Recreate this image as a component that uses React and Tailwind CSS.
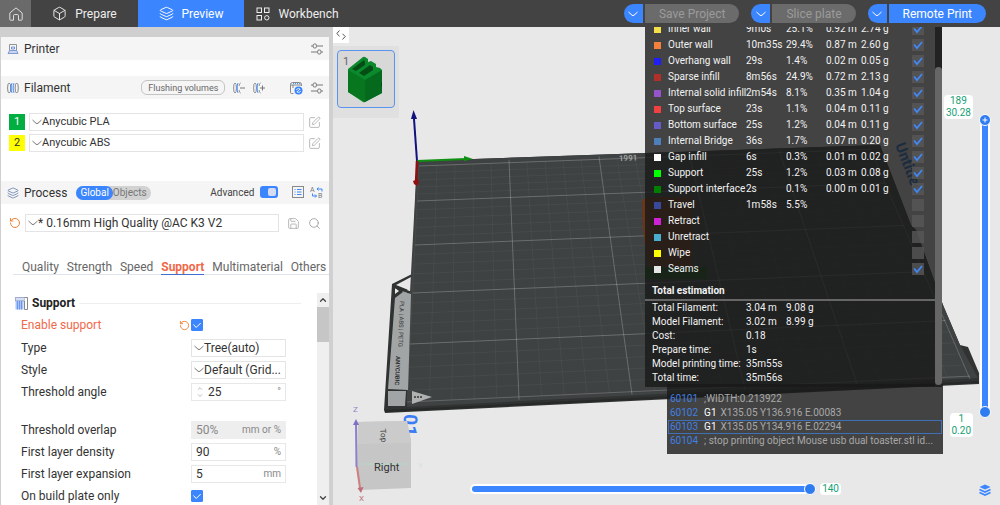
import { useState } from 'react';
import { Box, ChevronDown, ChevronUp, House, Layers, RotateCcw, Save, Search, SquarePen } from 'lucide-react';

const lineTypes = [
  { name: 'Inner wall', color: '#f5e04a', time: '9m0s', percent: '25.1%', length: '0.92 m', weight: '2.74 g', on: true },
  { name: 'Outer wall', color: '#f5803c', time: '10m35s', percent: '29.4%', length: '0.87 m', weight: '2.60 g', on: true },
  { name: 'Overhang wall', color: '#1f1ff5', time: '29s', percent: '1.4%', length: '0.02 m', weight: '0.05 g', on: true },
  { name: 'Sparse infill', color: '#b03029', time: '8m56s', percent: '24.9%', length: '0.72 m', weight: '2.13 g', on: true },
  { name: 'Internal solid infill', color: '#9654cc', time: '2m54s', percent: '8.1%', length: '0.35 m', weight: '1.04 g', on: true },
  { name: 'Top surface', color: '#f04040', time: '23s', percent: '1.1%', length: '0.04 m', weight: '0.11 g', on: true },
  { name: 'Bottom surface', color: '#665cc7', time: '25s', percent: '1.2%', length: '0.04 m', weight: '0.11 g', on: true },
  { name: 'Internal Bridge', color: '#4d80ba', time: '36s', percent: '1.7%', length: '0.07 m', weight: '0.20 g', on: true },
  { name: 'Gap infill', color: '#ffffff', time: '6s', percent: '0.3%', length: '0.01 m', weight: '0.02 g', on: true },
  { name: 'Support', color: '#00ff00', time: '25s', percent: '1.2%', length: '0.03 m', weight: '0.08 g', on: true },
  { name: 'Support interface', color: '#008000', time: '2s', percent: '0.1%', length: '0.00 m', weight: '0.01 g', on: true },
  { name: 'Travel', color: '#38489b', time: '1m58s', percent: '5.5%', on: false },
  { name: 'Retract', color: '#cd22d6', on: false },
  { name: 'Unretract', color: '#49adcf', on: false },
  { name: 'Wipe', color: '#ffff00', on: false },
  { name: 'Seams', color: '#e6e6e6', on: true },
];

const totals = [
  ['Total Filament:', '3.04 m', '9.08 g'],
  ['Model Filament:', '3.02 m', '8.99 g'],
  ['Cost:', '0.18'],
  ['Prepare time:', '1s'],
  ['Model printing time:', '35m55s'],
  ['Total time:', '35m56s'],
];

const gcode = [
  { line: 60101, text: ';WIDTH:0.213922' },
  { line: 60102, cmd: 'G1', text: 'X135.05 Y136.916 E.00083' },
  { line: 60103, cmd: 'G1', text: 'X135.05 Y134.916 E.02294' },
  { line: 60104, text: '; stop printing object Mouse usb dual toaster.stl id...' },
];

const tabs = ['Quality', 'Strength', 'Speed', 'Support', 'Multimaterial', 'Others'];

function GridIcon() {
  return (
    <svg className="h-[14px] w-[14px]" viewBox="0 0 14 14" fill="none" stroke="currentColor">
      <rect x="1" y="1" width="4.5" height="4.5" />
      <rect x="8.5" y="1" width="4.5" height="4.5" />
      <rect x="1" y="8.5" width="4.5" height="4.5" />
      <circle cx="10.8" cy="10.8" r="2.2" />
    </svg>
  );
}

function WideChevron() {
  return (
    <svg className="h-[6px] w-[10px] shrink-0" viewBox="0 0 10 6" fill="none" stroke="currentColor">
      <path d="M.5 1 4 4.200q1 .8 2 0L9.500 1" />
    </svg>
  );
}

function HomeIcon() {
  return (
    <svg className="h-[14px] w-[14px]" viewBox="0 0 14 14" fill="none" stroke="currentColor">
      <path d="M.8 6 7 .9 13.200 6v6.500q0 .7-.7.7H9.500V8.800q0-1.300-1.300-1.300H5.800q-1.300 0-1.300 1.300v4.400h-3q-.7 0-.7-.7z" />
    </svg>
  );
}

function SlidersIcon() {
  return (
    <svg className="h-3 w-3" viewBox="0 0 12 12" fill="none" stroke="#777">
      <path d="M0 3h2M5.5 3H12M0 9h6.5M10 9h2" />
      <rect x="2.2" y="1" width="3.2" height="4" rx="1.2" />
      <rect x="6.7" y="7" width="3.2" height="4" rx="1.2" />
    </svg>
  );
}

function PrinterIcon() {
  return (
    <svg className="h-3 w-3" viewBox="0 0 12 12" fill="none">
      <path d="M2.5 7.500V1.5h7v6" stroke="#888" strokeWidth=".9" />
      <path d="M4.500 4h3v2h-3z" stroke="#4b7be0" strokeWidth=".8" />
      <path d="M2.500 7.500h7l1.500 3H1z" fill="#c9d5f2" stroke="#6d86c4" strokeWidth=".8" />
    </svg>
  );
}

function SpoolIcon() {
  return (
    <svg className="h-3 w-3" viewBox="0 0 12 12" fill="none">
      <ellipse cx="2.2" cy="6" rx="1.6" ry="5" stroke="#777" strokeWidth=".9" />
      <path d="M5 1.2C3.8 3 3.8 9 5 10.8M7 1.2C5.8 3 5.8 9 7 10.8" stroke="#3b86ff" />
      <ellipse cx="9.7" cy="6" rx="1.6" ry="5" stroke="#777" strokeWidth=".9" />
    </svg>
  );
}

function SpoolEditIcon({ add }) {
  return (
    <svg className="h-3 w-3" viewBox="0 0 12 12" fill="none">
      <ellipse cx="2" cy="6" rx="1.4" ry="5" stroke="#888" strokeWidth=".9" />
      <path d="M5 1.2C3.8 3 3.8 9 5 10.8" stroke="#3b86ff" />
      <path d="M7.5 1C6.5 1.5 6.2 3 6.2 4M6.2 8c0 1 .3 2.500 1.300 3" stroke="#888" />
      <path d="M7 6h5" stroke="#777" />
      {add && <path d="M9.500 3.500v5" stroke="#777" />}
    </svg>
  );
}

function SyncIcon() {
  return (
    <svg className="h-[14px] w-[14px]" viewBox="0 0 14 14" fill="none">
      <path d="M12.500 5V3.500a2 2 0 0 0-2-2h-7a2 2 0 0 0-2 2V4h11M1.500 4v7.500a1 1 0 0 0 1 1h2M4 4v3" stroke="#888" />
      <path d="M4 2.600h7" stroke="#3b86ff" strokeDasharray="1 1" />
      <circle cx="9.500" cy="9.500" r="4" fill="#3b86ff" />
      <path d="M7.300 9c.8-1.800 3-1.900 4-.5M11.700 10c-.8 1.800-3 1.900-4 .5M8 11l3-3" stroke="#fff" strokeWidth=".8" />
    </svg>
  );
}

function ListIcon() {
  return (
    <svg className="h-3 w-3" viewBox="0 0 12 12" fill="none">
      <rect x=".5" y=".5" width="11" height="11" stroke="#888" />
      <path d="M2.500 3.500h1M5 3.500h4.500M2.500 6h1M5 6h4.500M2.500 8.500h1M5 8.500h4.500" stroke="#3b86ff" />
    </svg>
  );
}

function CompareIcon() {
  return (
    <svg className="h-[13px] w-[13px]" viewBox="0 0 13 13" fill="none">
      <text x="0" y="6" fontSize="7" fill="#777">A</text>
      <text x="8" y="12" fontSize="7" fill="#777">B</text>
      <path d="M12 5.500V3H7M8.500 1.500 7 3l1.500 1.500M2.500 7.500V10h4M5 8.500 6.500 10 5 11.500" stroke="#3b86ff" />
    </svg>
  );
}

function SupportIcon() {
  return (
    <svg className="h-[13px] w-[13px]" viewBox="0 0 13 13" fill="none">
      <path d="M.5.500h12v12h-3V4H.5z" stroke="#888" fill="#fff" />
      <path d="M.5 3.500h8v9h-8z" fill="#a9c5fb" />
      <path d="M2.500 4v8.500M4.500 4v8.500M6.500 4v8.500" stroke="#5c8ae6" strokeWidth=".8" />
      <path d="M.5.500h9v3h-9z" fill="#d5e0f8" stroke="#9aa8cc" strokeWidth=".6" />
    </svg>
  );
}

function SplitButton({ label, active }) {
  return (
    <div className="flex h-[19px] gap-0.5">
      <button aria-label={label + ' options'} className="flex w-[19px] items-center justify-center rounded-l-full bg-[#3b86ff] text-white">
        <WideChevron />
      </button>
      <button
        className={
          active
            ? 'rounded-r-full bg-[#3b86ff] px-[14px] text-xs text-white'
            : 'rounded-r-full bg-[#6b6b6b] px-[14px] text-xs text-[#9b9b9b]'
        }
      >
        {label}
      </button>
    </div>
  );
}

function NavTab({ icon, label, active }) {
  return (
    <button className={active ? 'flex w-[106px] items-center justify-center gap-2 bg-[#3b86ff] text-xs text-white' : 'flex w-[107px] items-center justify-center gap-2 text-xs text-[#eeeeee]'}>
      {icon}
      {label}
    </button>
  );
}

function Header() {
  return (
    <header className="z-10 flex h-[27px] shrink-0 items-stretch bg-[#434343]">
      <button aria-label="Home" className="flex w-[31px] items-center justify-center bg-[#6a6a6a] text-[#dddddd]">
        <HomeIcon />
      </button>
      <NavTab icon={<Box className="h-[15px] w-[15px]" strokeWidth={1.5} />} label="Prepare" />
      <NavTab icon={<Layers className="h-[15px] w-[15px]" strokeWidth={1.5} />} label="Preview" active />
      <NavTab icon={<GridIcon />} label="Workbench" />
      <div className="ml-auto flex items-center gap-3 pr-[14px]">
        <SplitButton label="Save Project" />
        <SplitButton label="Slice plate" />
        <SplitButton label="Remote Print" active />
      </div>
    </header>
  );
}

function Picker({ label, options, className }) {
  return (
    <div className={'flex h-[18px] items-center border border-[#e4e4e4] bg-white pl-0.5 text-[#777] ' + className}>
      <WideChevron />
      <select aria-label={label} className="w-full min-w-0 appearance-none truncate bg-transparent text-[#333] outline-none">
        {options.map((o) => (
          <option key={o}>{o}</option>
        ))}
      </select>
    </div>
  );
}

function SectionBar({ icon, title, children }) {
  return (
    <div className="flex h-[23px] items-center gap-[5px] bg-[#f5f5f5] pr-1.5 pl-1.5">
      {icon}
      <h2 className="text-xs text-[#333]">{title}</h2>
      {children}
    </div>
  );
}

function BlueCheck({ id }) {
  const [on, setOn] = useState(true);
  return (
    <span className="grid h-3 w-3 place-items-center">
      <input id={id} type="checkbox" checked={on} onChange={() => setOn(!on)} className="col-start-1 row-start-1 h-3 w-3 appearance-none rounded-[1px] border border-[#3b86ff] checked:bg-[#3b86ff]" />
      {on && (
        <svg className="pointer-events-none col-start-1 row-start-1 h-3 w-3" viewBox="0 0 12 12" fill="none" stroke="#fff">
          <path d="m2.500 5.500 2.700 3 4.500-4.500" />
        </svg>
      )}
    </span>
  );
}

function NumberField({ id, value, unit, disabled, spinner }) {
  return (
    <div className={disabled ? 'flex h-[18px] w-[95px] items-center bg-[#eeeeee] px-[5px] text-[#888]' : 'flex h-[18px] w-[95px] items-center border border-[#e8e8e8] bg-white px-1 text-[#333]'}>
      {spinner && (
        <span className="mr-1 flex flex-col text-[#888]">
          <ChevronUp className="h-[7px] w-2" />
          <ChevronDown className="h-[7px] w-2" />
        </span>
      )}
      <input id={id} defaultValue={value} disabled={disabled} className="w-full min-w-0 bg-transparent outline-none" />
      <span className="shrink-0 text-[10px] text-[#888]">{unit}</span>
    </div>
  );
}

function Row({ id, label, children }) {
  return (
    <div className="flex h-[22px] items-center">
      <label htmlFor={id} className="w-[170px] shrink-0">{label}</label>
      {children}
    </div>
  );
}

function Sidebar() {
  return (
    <aside className="flex w-1/3 shrink-0 flex-col border-r-4 border-l border-[#d0d0d0] bg-white text-xs text-[#444]">
      <div className="h-[10px] shrink-0 bg-[#cfcfcf]" />
      <SectionBar icon={<PrinterIcon />} title="Printer">
        <button aria-label="Printer settings" className="ml-auto"><SlidersIcon /></button>
      </SectionBar>
      <div className="mt-4">
        <SectionBar icon={<SpoolIcon />} title="Filament">
          <div className="ml-auto flex items-center gap-2">
            <button className="h-[15px] rounded-md border border-[#c4c4c4] px-1.5 text-[9px] leading-3 text-[#666]">Flushing volumes</button>
            <button aria-label="Remove filament"><SpoolEditIcon /></button>
            <button aria-label="Add filament"><SpoolEditIcon add /></button>
            <button aria-label="Sync filament" className="ml-4"><SyncIcon /></button>
            <button aria-label="Filament settings"><SlidersIcon /></button>
          </div>
        </SectionBar>
      </div>
      <div className="mt-[14px] flex flex-col gap-[3px] px-2 text-[11px]">
        <div className="flex items-center gap-1">
          <span className="flex h-4 w-4 items-center justify-center bg-[#00ae42] text-white">1</span>
          <Picker label="Filament 1" options={['Anycubic PLA']} className="flex-1" />
          <button aria-label="Edit filament 1"><SquarePen className="h-[13px] w-[13px] text-[#aaa]" strokeWidth={1.500} /></button>
        </div>
        <div className="flex items-center gap-1">
          <span className="flex h-4 w-4 items-center justify-center bg-[#ffff00] text-[#333]">2</span>
          <Picker label="Filament 2" options={['Anycubic ABS']} className="flex-1" />
          <button aria-label="Edit filament 2"><SquarePen className="h-[13px] w-[13px] text-[#aaa]" strokeWidth={1.500} /></button>
        </div>
      </div>
      <div className="mt-[29px]">
        <SectionBar icon={<Layers className="h-3 w-3 text-[#5b76a8]" strokeWidth={1.500} />} title="Process">
          <div className="ml-1 flex h-[14px] items-center rounded-full bg-[#d2d2d2] text-[10px] leading-[14px] text-[#777]">
            <button className="h-full rounded-full bg-[#3b86ff] px-1 text-white">Global</button>
            <button className="pr-1">Objects</button>
          </div>
          <div className="ml-auto flex items-center gap-1.5 text-[10px]">
            <label htmlFor="advanced">Advanced</label>
            <span className="grid h-3 w-[18px] items-center">
              <input id="advanced" type="checkbox" role="switch" defaultChecked className="col-start-1 row-start-1 h-3 w-[18px] appearance-none rounded-[3px] bg-[#bbb] checked:bg-[#3b86ff]" />
              <span className="pointer-events-none col-start-1 row-start-1 mr-0.5 h-2 w-2 justify-self-end rounded-[2px] bg-[#d5dcf0]" />
            </span>
            <button aria-label="Parameter list" className="ml-2"><ListIcon /></button>
            <button aria-label="Compare presets"><CompareIcon /></button>
          </div>
        </SectionBar>
      </div>
      <div className="mt-[10px] flex items-center gap-2 px-2">
        <button aria-label="Reset preset"><RotateCcw className="h-3 w-3 text-[#ee7f35]" strokeWidth={2} /></button>
        <Picker label="Process preset" options={['* 0.16mm High Quality @AC K3 V2']} className="-ml-1 flex-1" />
        <button aria-label="Save preset"><Save className="h-[13px] w-[13px] text-[#aaa]" strokeWidth={1.500} /></button>
        <button aria-label="Search settings"><Search className="h-[13px] w-[13px] text-[#999]" strokeWidth={1.500} /></button>
      </div>
      <nav className="mt-7 ml-3 flex justify-between border-b border-[#dfe3ea] pr-[3px] pl-[9px]">
        {tabs.map((tab) => (
          <button
            key={tab}
            className={tab === 'Support' ? '-mb-px border-b border-[#3b6fd0] leading-[14px] font-bold text-[#f0694a]' : 'leading-[14px] text-[#666]'}
          >
            {tab}
          </button>
        ))}
      </nav>
      <div className="mt-[18px] flex min-h-0 flex-1">
        <div className="min-w-0 flex-1 overflow-hidden pr-4 pl-[14px] text-[#333]">
          <div className="flex h-5 items-center gap-1">
            <SupportIcon />
            <h3 className="font-bold text-[#222]">Support</h3>
            <div className="h-px flex-1 bg-[#eeeeee]" />
          </div>
          <div className="pl-1.5">
            <div className="flex h-6 items-center">
              <label htmlFor="enable" className="w-[158px] text-[#f0694a]">Enable support</label>
              <button aria-label="Reset enable support" className="w-3"><RotateCcw className="h-[11px] w-[11px] text-[#ee7f35]" strokeWidth={2} /></button>
              <BlueCheck id="enable" />
            </div>
            <Row label="Type"><Picker label="Type" options={['Tree(auto)']} className="w-[95px]" /></Row>
            <Row label="Style"><Picker label="Style" options={['Default (Grid...']} className="w-[95px]" /></Row>
            <Row id="angle" label="Threshold angle"><NumberField id="angle" value="25" unit="°" spinner /></Row>
            <div className="h-4" />
            <Row id="overlap" label="Threshold overlap"><NumberField id="overlap" value="50%" unit="mm or %" disabled /></Row>
            <Row id="density" label="First layer density"><NumberField id="density" value="90" unit="%" /></Row>
            <Row id="expansion" label="First layer expansion"><NumberField id="expansion" value="5" unit="mm" /></Row>
            <Row id="plate" label="On build plate only"><BlueCheck id="plate" /></Row>
          </div>
        </div>
        <div className="flex w-3 flex-col items-center bg-[#efefef] text-[#444]">
          <ChevronUp className="my-0.5 h-[10px] w-[10px]" strokeWidth={3} />
          <div className="h-[35px] w-full bg-[#c6c6c6]" />
          <ChevronDown className="mt-auto mb-0.5 h-[10px] w-[10px]" strokeWidth={3} />
        </div>
      </div>
    </aside>
  );
}

const colTop = [419, 509, 599, 689, 779, 869];
const colBottom = [407, 519, 632, 745, 857, 970];
const rowLeft = [166, 201, 245, 293, 344, 402];

const between = (list, split) =>
  list.slice(0, -1).flatMap((v, i) => Array.from({ length: split }, (_, k) => v + ((list[i + 1] - v) * k) / split));

function Scene() {
  const tops = between(colTop, 5);
  const bottoms = between(colBottom, 5);
  const rows = between(rowLeft, 5);
  const rowEnd = (y) => {
    const t = (y - 166) / 236;
    return [870 + t * 100, y - (0.037 + t * 0.009) * (450 + t * 112)];
  };
  return (
    <svg className="absolute inset-0 h-full w-full" viewBox="333 27 667 478" preserveAspectRatio="xMinYMin slice" fill="none">
      {/* base and bed */}
      <path d="M417 161 880 145l31 80 5 5 27 75 17 40 8 2 11 26v11L385 413l-1-3 8-126 20-10z" fill="#313333" />
      <path d="m396 285 15-8v14z" fill="#e8e8e8" />
      <path d="m395 288 4 3-4 3zM402 292l9-4v6z" fill="#e8e8e8" />
      <path d="m393 286 18 7" stroke="#313333" strokeWidth="2.500" />
      <path d="M417 161 880 145l31 80 5 5 27 75 17 40 18 33L407 407l3-115z" fill="#3f4242" />
      <path d="m385 411 594-29" stroke="#272929" strokeWidth="2" />
      <g stroke="#ffffff" strokeOpacity=".045">
        {tops.map((x, i) => (
          <path key={x} d={`M${x} ${166 - (x - 419) * 0.037}L${bottoms[i]} ${402 - (bottoms[i] - 407) * 0.046}`} />
        ))}
        {rows.map((y) => (
          <path key={y} d={`M${419 - (y - 166) / 20} ${y}L${rowEnd(y).join(' ')}`} />
        ))}
      </g>
      <g stroke="#ffffff" strokeOpacity=".2">
        {colTop.slice(1).map((x, i) => (
          <path key={x} d={`M${x} ${166 - (x - 419) * 0.037 - 3}L${colBottom[i + 1]} ${402 - (colBottom[i + 1] - 407) * 0.046 + 3}`} />
        ))}
        {rowLeft.map((y) => (
          <path key={y} d={`M${419 - (y - 166) / 20} ${y}L${rowEnd(y).join(' ')}`} />
        ))}
      </g>
      <text x="619" y="161" fontSize="8" fontWeight="bold" fill="#a0a0a0" transform="rotate(-2 619 161)">1991</text>
      <text x="895" y="145" fontSize="15" fontWeight="bold" fill="#2f78d8" transform="rotate(69 895 145)">Untitled</text>
      {/* printed object behind the legend */}
      <path d="M642 201q3-4 8-4h42v74h-42q-8-30-8-70z" fill="#6a3518" />
      <path d="M645 267h62v12h-62z" fill="#155018" />

      {/* plate label */}
      <path d="m395 298 8-6 8 2-3 96-20-1z" fill="#a2a5a5" />
      <path d="M388 391h18l-1 15h-17z" fill="#a2a5a5" />
      <text x="400" y="301" fontSize="6" fill="#333" transform="rotate(92 400 301)">PLA | ABS | PETG</text>
      <text x="396" y="356" fontSize="6" fontWeight="bold" fill="#333" transform="rotate(92 396 356)">ANYCUBIC</text>
      <path d="m412 391 20 6-20 7z" fill="#b0b2b2" />
      <path d="M414 397h9" stroke="#555" strokeWidth="2" strokeDasharray="2 1" />
      <text x="404" y="414" fontSize="19" fontWeight="bold" fill="#3b7bf5" transform="rotate(92 404 414)">01</text>

      {/* origin axes */}
      <path d="m417 161-3-42" stroke="#12127f" strokeWidth="2" />
      <path d="m413.500 110 3.500 9h-6z" fill="#12127f" />
      <path d="m417 161 49-2" stroke="#109010" strokeWidth="2" />
      <path d="m464 156 9 3-9 2z" fill="#109010" />
      <path d="m417 161-1 22" stroke="#8f1010" strokeWidth="2.500" />
      <path d="m413 181 5-2 1 3-2 4-3-2z" fill="#8f1010" />

      {/* view cube */}
      <path d="m358 422 49-1 4 19v48l-51 2-3-20z" fill="#c6c6c6" />
      <path d="m358 422 49-1 4 22-53 1z" fill="#cbcbcb" />
      <path d="M362 464h46" stroke="#bcd0c6" strokeWidth="2" />
      <text x="380" y="429" fontSize="8" fill="#444" transform="rotate(84 380 429)">Top</text>
      <text x="374" y="471" fontSize="11" fill="#333">Right</text>
      <path d="m356.500 467-.5-44" stroke="#8a80cc" strokeWidth="2" />
      <path d="m356 419 3 6h-6z" fill="#7a70c4" />
      <path d="m357 467 3 21" stroke="#cc7f7f" strokeWidth="2" />
      <path d="m361 493-3.500-5 6-1z" fill="#c06c7a" />
      <text x="353" y="412" fontSize="8" fill="#8a80cc">Z</text>
      <text x="359" y="501" fontSize="8" fill="#c06c7a">X</text>
      <text x="418" y="468" fontSize="8" fill="#d5e2dc">Y</text>
    </svg>
  );
}

function PlateThumbnail() {
  return (
    <div className="absolute top-[19px] left-0 bg-[#e0e0e0] p-1 pb-[10px]">
      <button className="flex h-[58px] w-[58px] rounded-sm border border-[#5a93f0] bg-[#d8d8d8]" aria-label="Plate 1">
        <svg className="h-full w-full" viewBox="0 0 56 56">
          <text x="5" y="14" fontSize="11" fill="#666">1</text>
          <path d="m10 18 15-12q1-.5 2 0l3 2v3l3-1 5 3v3l4 1 2 2v23L27 51q-1 .500-2 0L10 41z" fill="#0a8a2c" />
          <path d="m27 29 17-10v23L27 51z" fill="#066a1e" />
          <path d="m10 19 17 10v22L10 41z" fill="#07761f" />
          <path d="m14 18 12-9 1 2v3l-9 6zM21 22l11-8 3 2v3l-9 6z" fill="#044d14" />
          <path d="m43 31 1 1v3l-1 1z" fill="#044d14" />
        </svg>
      </button>
    </div>
  );
}

function Legend() {
  return (
    <section className="absolute top-0 right-[58px] flex w-[297px] overflow-hidden bg-[#191919]/80 text-[10px] text-[#f2f2f2]">
      <div className="-mt-1.5 min-w-0 flex-1 pb-0.5">
        <table className="w-full table-fixed">
          <tbody>
            {lineTypes.map((type) => (
              <tr key={type.name} className="h-4 leading-4 whitespace-nowrap">
                <td className="w-[23px] pl-[9px]">
                  <div className="h-[7px] w-[7px]" style={{ backgroundColor: type.color }} />
                </td>
                <td className="w-[78px]"><label htmlFor={type.name}>{type.name}</label></td>
                <td className="w-10">{type.time}</td>
                <td className="w-10">{type.percent}</td>
                <td className="w-[35px]">{type.length}</td>
                <td>{type.weight}</td>
                <td className="w-[23px]">
                  <span className="grid h-3 w-3">
                    <input id={type.name} type="checkbox" defaultChecked={type.on} className="peer col-start-1 row-start-1 h-3 w-3 appearance-none bg-[#585858]/80" />
                    <svg className="pointer-events-none invisible col-start-1 row-start-1 h-3 w-3 peer-checked:visible" viewBox="0 0 12 12" fill="none" stroke="#3f88f8" strokeWidth="1.800">
                      <path d="m2 5.500 3 3.500 5-6" />
                    </svg>
                  </span>
                </td>
              </tr>
            ))}
          </tbody>
        </table>
        <h2 className="mt-1.5 border-b-2 border-[#666] pl-[7px] leading-4 font-bold">Total estimation</h2>
        <table className="w-full table-fixed">
          <tbody>
            {totals.map(([label, first, second]) => (
              <tr key={label} className="leading-[14px] whitespace-nowrap">
                <th className="w-[101px] pl-[7px] text-left font-normal">{label}</th>
                <td className="w-10">{first}</td>
                <td>{second}</td>
              </tr>
            ))}
          </tbody>
        </table>
      </div>
      <div className="flex w-[7px] flex-col bg-[#222]">
        <div className="mt-10 mb-0.5 flex-1 rounded-sm bg-[#666]" />
      </div>
    </section>
  );
}

function GcodePanel() {
  return (
    <section className="absolute right-[57px] bottom-[51px] w-[276px] bg-[#191919]/80 px-px pt-2 pb-[6px] text-[10px] leading-3 text-[#a8a8a8]">
      {gcode.map((g) => (
        <p
          key={g.line}
          className={g.line === 60103 ? 'truncate border border-[#3f6fb5] px-px' : 'truncate border border-transparent px-px'}
        >
          <span className="mr-1.5 text-[#4180e0]">{g.line}</span>
          {g.cmd && <span className="mr-1 text-white">{g.cmd}</span>}
          {g.text}
        </p>
      ))}
    </section>
  );
}

function LayerSlider() {
  return (
    <div className="absolute top-[68px] right-[9px] bottom-[68px] flex gap-1.5 text-center text-[10px] leading-3 text-[#16a075]">
      <div className="flex flex-col items-end justify-between">
        <div className="rounded-sm bg-white px-0.5">189<br />30.28</div>
        <div className="rounded-sm bg-white px-0.5">1<br />0.20</div>
      </div>
      <div className="relative mt-[19px] mb-[19px] w-3">
        <div className="absolute inset-x-[3px] inset-y-1 bg-[#3b86ff] ring-2 ring-white" />
        <input
          aria-label="Bottom layer"
          type="range"
          min="1"
          max="189"
          defaultValue="1"
          className="absolute inset-0 h-full w-3 appearance-none bg-transparent [direction:rtl] [writing-mode:vertical-lr] [&::-webkit-slider-thumb]:h-3 [&::-webkit-slider-thumb]:w-3 [&::-webkit-slider-thumb]:appearance-none [&::-webkit-slider-thumb]:rounded-full [&::-webkit-slider-thumb]:border [&::-webkit-slider-thumb]:border-white [&::-webkit-slider-thumb]:bg-[#2f7bf0]"
        />
        <input
          aria-label="Top layer"
          type="range"
          min="1"
          max="189"
          defaultValue="189"
          className="pointer-events-none absolute inset-0 h-full w-3 appearance-none bg-transparent [direction:rtl] [writing-mode:vertical-lr] [&::-webkit-slider-thumb]:pointer-events-auto [&::-webkit-slider-thumb]:h-3 [&::-webkit-slider-thumb]:w-3 [&::-webkit-slider-thumb]:appearance-none [&::-webkit-slider-thumb]:rounded-full [&::-webkit-slider-thumb]:border [&::-webkit-slider-thumb]:border-white [&::-webkit-slider-thumb]:bg-[#2f7bf0]"
        />
        <svg className="pointer-events-none absolute top-0 left-0 h-3 w-3" viewBox="0 0 12 12" stroke="#fff">
          <path d="M3.500 6h5M6 3.500v5" />
        </svg>
      </div>
    </div>
  );
}

function MoveSlider() {
  return (
    <div className="absolute right-[159px] bottom-2.5 left-[139px] flex items-center gap-1 text-[10px] leading-3 text-[#16a075]">
      <div className="relative h-3 flex-1">
        <div className="absolute inset-x-1 inset-y-[3px] left-0 rounded-sm bg-[#3b86ff] ring-2 ring-white" />
        <input
          aria-label="Move"
          type="range"
          min="1"
          max="140"
          defaultValue="140"
          className="absolute inset-0 h-3 w-full appearance-none bg-transparent [&::-webkit-slider-thumb]:h-3 [&::-webkit-slider-thumb]:w-3 [&::-webkit-slider-thumb]:appearance-none [&::-webkit-slider-thumb]:rounded-full [&::-webkit-slider-thumb]:border [&::-webkit-slider-thumb]:border-white [&::-webkit-slider-thumb]:bg-[#2f7bf0]"
        />
      </div>
      <span className="rounded-sm bg-white px-0.5">140</span>
    </div>
  );
}

function App() {
  return (
    <div className="flex h-screen flex-col overflow-hidden bg-[#e8e8e8] font-[Roboto,sans-serif]">
      <Header />
      <div className="flex min-h-0 flex-1">
        <Sidebar />
        <main className="relative min-w-0 flex-1 overflow-hidden">
          <Scene />
          <button aria-label="Collapse sidebar" className="absolute top-0 left-0 flex h-4 w-4 items-center justify-center bg-white">
            <svg className="h-[10px] w-[10px]" viewBox="0 0 10 10" fill="none" stroke="#555">
              <path d="M3.500.500.8 3.500l2.700 2.700M6.500 3.800l2.700 2.700-2.700 3" />
            </svg>
          </button>
          <PlateThumbnail />
          <GcodePanel />
          <Legend />
          <LayerSlider />
          <MoveSlider />
          <button aria-label="Layer view" className="absolute right-[9px] bottom-[9px]">
            <svg className="h-3 w-3" viewBox="0 0 12 12" fill="#3b86ff">
              <path d="m6 .500 5.500 2.500L6 5.500.500 3z" />
              <path d="M.500 5.500 6 8l5.500-2.500M.500 8.500 6 11l5.500-2.500" fill="none" stroke="#3b86ff" strokeWidth="1.600" />
            </svg>
          </button>
        </main>
      </div>
    </div>
  );
}

export default App;
